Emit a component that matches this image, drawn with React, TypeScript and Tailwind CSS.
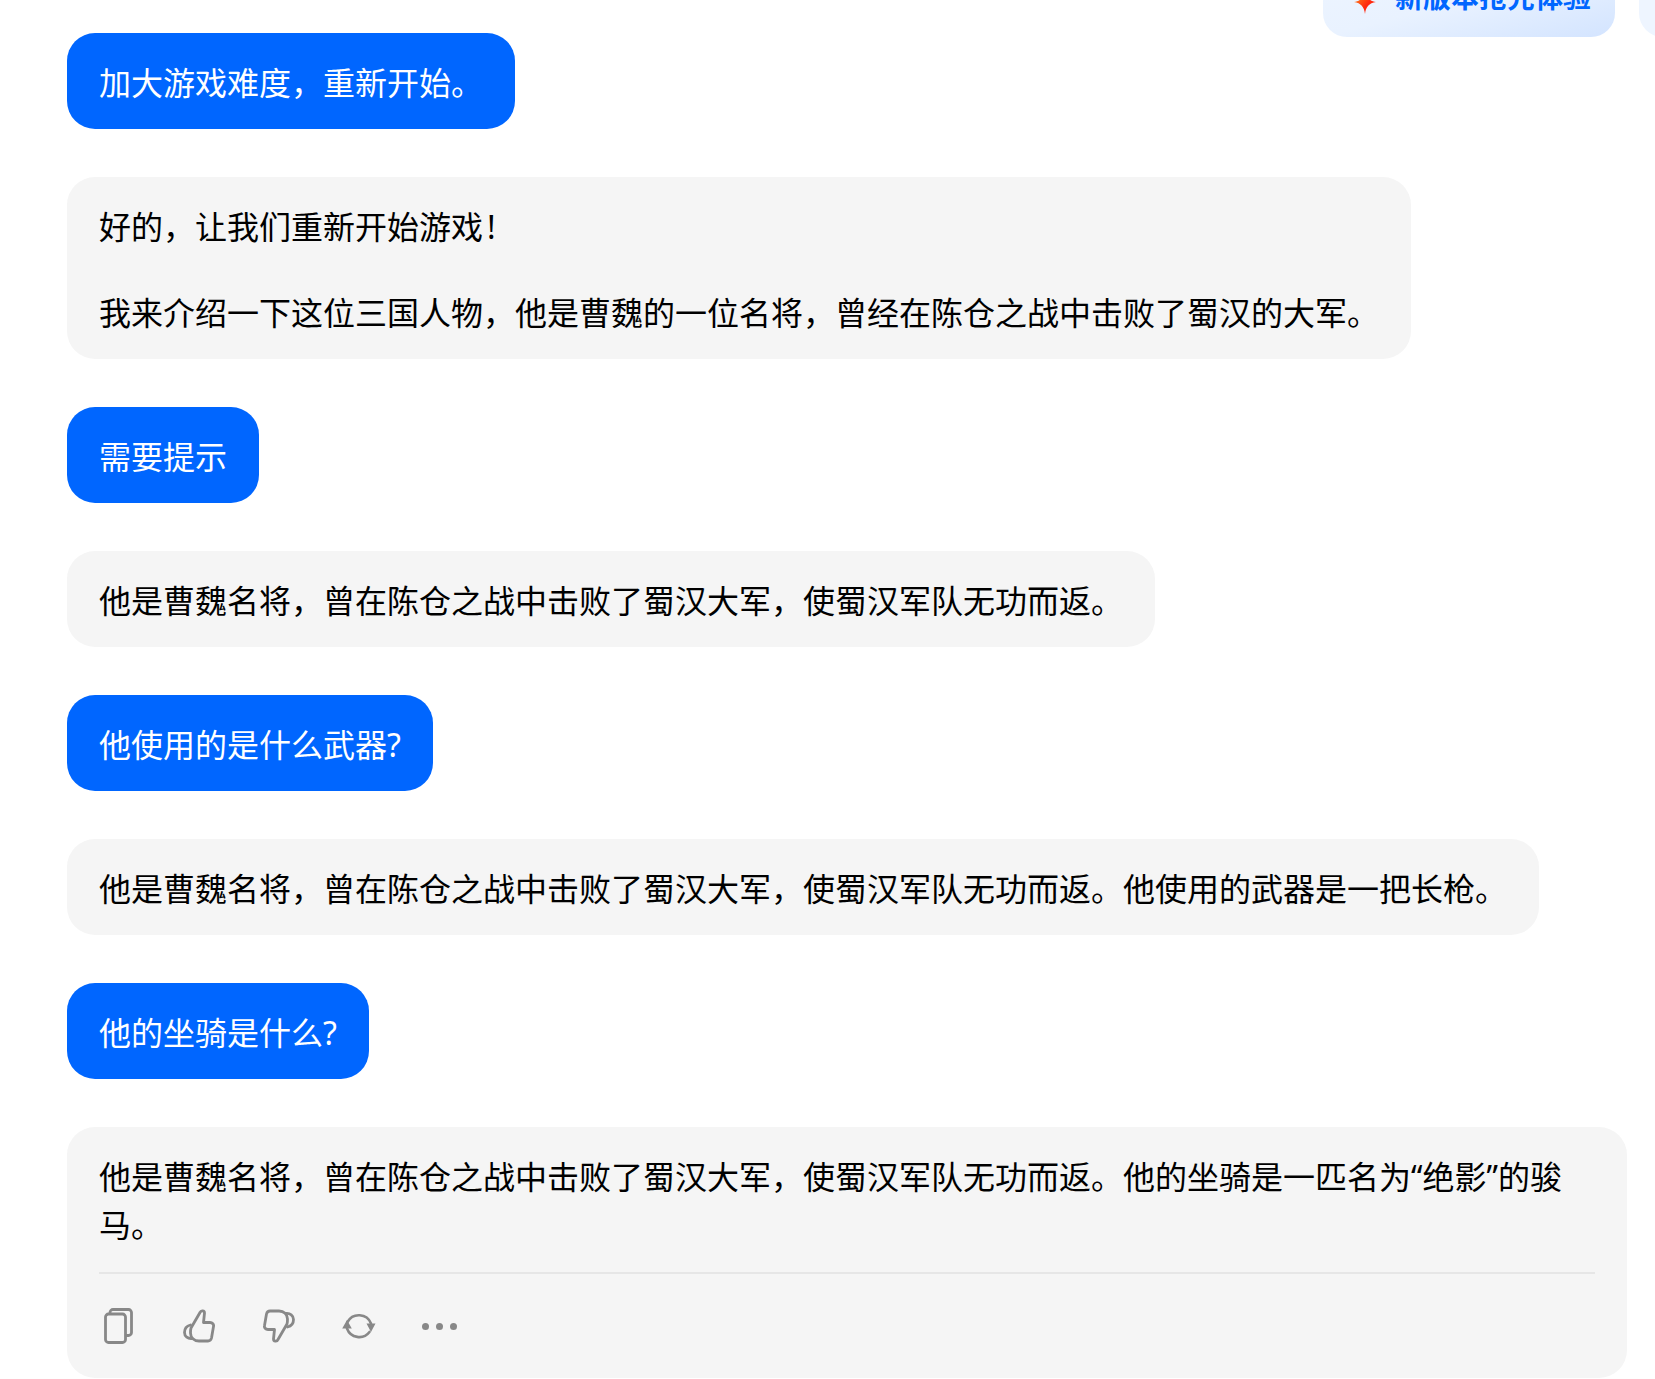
import React from "react";

const cjk = "font-['Noto_Sans','Noto_Sans_CJK_SC',sans-serif]";

function UserBubble({ text }: { text: string }) {
  return (
    <div className="w-fit rounded-[28px] bg-[#0066ff] px-8 pb-[22px] pt-[26px] text-[32px] leading-[48px] text-white">
      {text}
    </div>
  );
}

function BotBubble({ children }: { children: React.ReactNode }) {
  return (
    <div className="w-fit rounded-[28px] bg-[#f5f5f5] px-8 pb-[22px] pt-[26px] text-[32px] leading-[48px] text-black">
      {children}
    </div>
  );
}

function CopyIcon() {
  return (
    <svg width="30" height="36" viewBox="0 0 30 36" fill="none" stroke="#888888" strokeWidth="2.8" strokeLinejoin="round">
      <rect x="1.500" y="6" width="20" height="28.500" rx="3" />
      <path d="M6 6V4.500A3 3 0 0 1 9 1.500h15.500a3 3 0 0 1 3 3v20a3 3 0 0 1-3 3h-3" />
    </svg>
  );
}

// same hand for up and down, down is just turned round
const thumbHand = "M8 19L17 3.500C18 1 21.500 1.500 21.500 4L20.500 13.500H27C29.500 13.500 31 15.500 30.500 17.500L28.500 29C28 31 26.500 32 25 32H16C11 32 7.500 28.500 7.500 24C7.500 22 7.500 20.500 8 19Z";
const thumbCrescent = "M7.500 16C3.500 17 1.500 20 1.500 23.500C1.500 27.500 5 30 9 29.500";

function ThumbUp() {
  return (
    <svg width="32" height="34" viewBox="0 0 32 34" fill="none" stroke="#888888" strokeWidth="2.8" strokeLinejoin="round" strokeLinecap="round">
      <path d={thumbHand} />
      <path d={thumbCrescent} />
    </svg>
  );
}

function ThumbDown() {
  return (
    <svg width="32" height="34" viewBox="0 0 32 34" fill="none" stroke="#888888" strokeWidth="2.8" strokeLinejoin="round" strokeLinecap="round">
      <g transform="rotate(180 16 17)">
        <path d={thumbHand} />
        <path d={thumbCrescent} />
      </g>
    </svg>
  );
}

function RefreshIcon() {
  return (
    <svg width="34" height="30" viewBox="0 0 34 30" fill="none">
      <path d="M5.500 11A13 13 0 0 1 29 12.500M5 17.500A13 13 0 0 0 27.500 21" stroke="#888888" strokeWidth="2.6" strokeLinecap="round" />
      <path d="M5 9l4.800 8.500H.2zM24.500 12.500h9L29 21z" fill="#888888" />
    </svg>
  );
}

function ActionSlot({ children }: { children: React.ReactNode }) {
  return <div className="flex w-10 justify-center">{children}</div>;
}

export default function App() {
  return (
    <div className={`relative h-[1379px] overflow-hidden bg-white pl-[67px] pr-7 pt-[33px] ${cjk}`}>
      {/* top right floating buttons, cut by the window */}
      <div className="absolute left-[1323px] top-[-40px] flex h-[77px] w-[292px] items-start gap-[18px] rounded-b-[24px] bg-gradient-to-br from-[#eef5ff] via-[#e9f2ff] to-[#d3e4ff] pl-[30px] pt-[17px]">
        <svg className="mt-[13px]" width="24" height="24" viewBox="0 0 24 24">
          <defs>
            <linearGradient id="star" x1="0" y1="0" x2="1" y2="1">
              <stop offset="0" stopColor="#ffa01f" />
              <stop offset="0.6" stopColor="#ff2a10" />
            </linearGradient>
          </defs>
          <path d="M12 0c.8 7 4 11 11 12-7 1-10.200 5-11 12-.8-7-4-11-11-12 7-1 10.200-5 11-12z" fill="url(#star)" />
        </svg>
        <span className="text-[28px] font-bold leading-[40px] text-[#0066ff]">新版本抢先体验</span>
      </div>
      <div className="absolute left-[1639px] top-[-40px] h-[77px] w-[60px] rounded-bl-[24px] bg-[#eef5ff]" />

      <div className="flex flex-col gap-12">
        <UserBubble text="加大游戏难度，重新开始。" />
        <BotBubble>
          <p>好的，让我们重新开始游戏<span className="ml-1">!</span></p>
          <p className="mt-[38px]">我来介绍一下这位三国人物，他是曹魏的一位名将，曾经在陈仓之战中击败了蜀汉的大军。</p>
        </BotBubble>
        <UserBubble text="需要提示" />
        <BotBubble>他是曹魏名将，曾在陈仓之战中击败了蜀汉大军，使蜀汉军队无功而返。</BotBubble>
        <UserBubble text="他使用的是什么武器?" />
        <BotBubble>他是曹魏名将，曾在陈仓之战中击败了蜀汉大军，使蜀汉军队无功而返。他使用的武器是一把长枪。</BotBubble>
        <UserBubble text="他的坐骑是什么?" />
        <div className="rounded-[28px] bg-[#f5f5f5] px-8 pt-[26px] text-[32px] leading-[48px] text-black">
          <p>他是曹魏名将，曾在陈仓之战中击败了蜀汉大军，使蜀汉军队无功而返。他的坐骑是一匹名为“绝影”的骏马。</p>
          <div className="mt-[23px] h-[2px] bg-[#e6e6e6]" />
          <div className="flex h-[104px] items-center gap-10">
            <ActionSlot><CopyIcon /></ActionSlot>
            <ActionSlot><ThumbUp /></ActionSlot>
            <ActionSlot><ThumbDown /></ActionSlot>
            <ActionSlot><RefreshIcon /></ActionSlot>
            <ActionSlot>
              <div className="flex gap-[7px]">
                <span className="h-[7px] w-[7px] shrink-0 rounded-full bg-[#888888]" />
                <span className="h-[7px] w-[7px] shrink-0 rounded-full bg-[#888888]" />
                <span className="h-[7px] w-[7px] shrink-0 rounded-full bg-[#888888]" />
              </div>
            </ActionSlot>
          </div>
        </div>
      </div>
    </div>
  );
}
